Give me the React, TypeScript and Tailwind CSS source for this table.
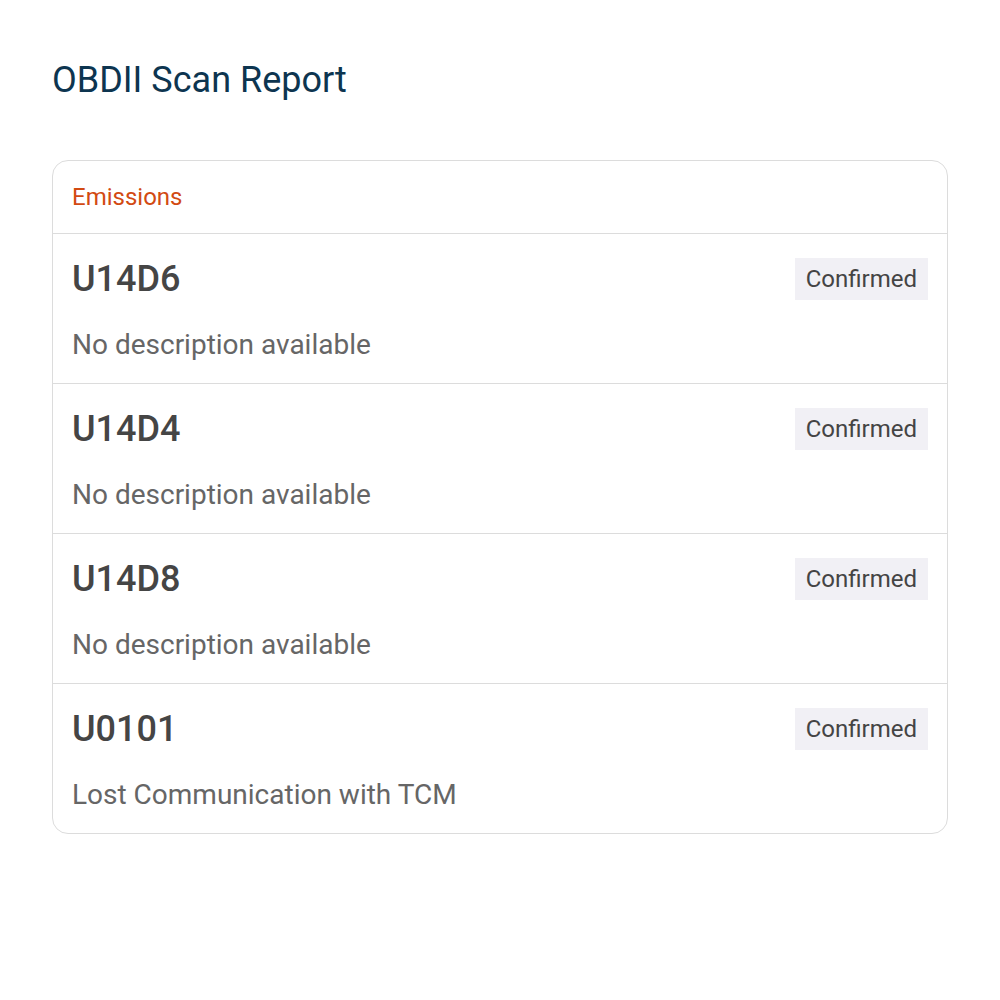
import React from "react";

const rows = [
  { code: "U14D6", desc: "No description available" },
  { code: "U14D4", desc: "No description available" },
  { code: "U14D8", desc: "No description available" },
  { code: "U0101", desc: "Lost Communication with TCM" },
];

export default function App() {
  return (
    <div className="min-h-[1000px] bg-white px-[52px] pt-[56px]" style={{ fontFamily: "Roboto, sans-serif" }}>
      <h1 className="text-[36px] leading-[48px] text-[#0d3550]">OBDII Scan Report</h1>
      <div className="mt-[56px] rounded-[16px] border border-[#dcdcdc] overflow-hidden">
        <div className="h-[73px] flex items-center px-[19px] text-[24px] text-[#d24a12] border-b border-[#dcdcdc]">
          Emissions
        </div>
        {rows.map((r, i) => (
          <div
            key={r.code}
            className={`px-[19px] pt-[24px] ${i < rows.length - 1 ? "h-[150px] border-b border-[#dcdcdc]" : "h-[149px]"}`}
          >
            <div className="flex items-center justify-between h-[42px]">
              <div className="text-[36px] font-medium text-[#454545]">{r.code}</div>
              <div className="bg-[#f1f0f5] h-[42px] px-[11px] flex items-center text-[24px] text-[#444]">Confirmed</div>
            </div>
            <div className="mt-[27px] text-[28px] leading-[36px] text-[#666]">{r.desc}</div>
          </div>
        ))}
      </div>
    </div>
  );
}
